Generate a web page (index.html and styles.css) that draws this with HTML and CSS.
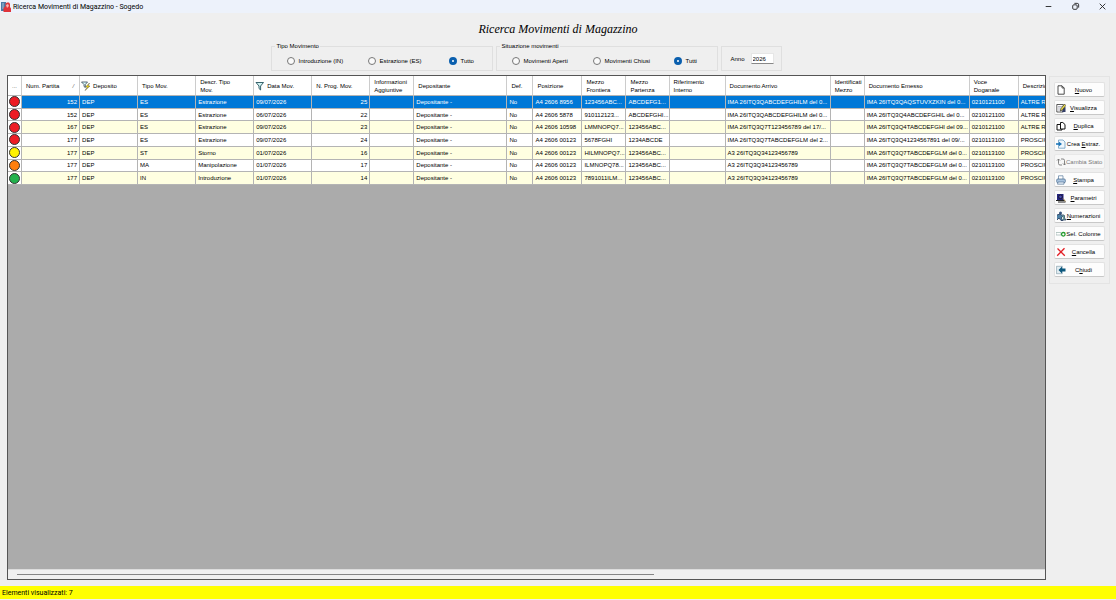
FILE: index.html
```html
<!DOCTYPE html>
<html lang="it">
<head>
  <meta charset="UTF-8" />
  <meta name="viewport" content="width=device-width, initial-scale=1.0" />
  <title>Ricerca Movimenti di Magazzino - Sogedo</title>
  <link rel="stylesheet" href="styles.css">
</head>
<body>
  <header class="titlebar">
    <svg class="app-icon" viewBox="0 0 10 10">
      <rect x="0" y="0" width="5" height="9" fill="#4a7aa5"/>
      <path d="M1 2h2M1 4h2M1 6h2" stroke="#d5e4f0" stroke-width=".7"/>
      <path d="M2.500 10V6l2-2V1.500L6 .5h2l1 1.500v3l1 1.500V10z" fill="#e0343a"/>
      <path d="M5 3l2-1 1 2-2 2z" fill="#f7b5b0"/>
    </svg>
    <span class="caption">Ricerca Movimenti di Magazzino - Sogedo</span>
    <div class="window-controls">
      <button aria-label="Riduci"><svg viewBox="0 0 8 8"><path d="M1.500 4h5"/></svg></button>
      <button aria-label="Ripristina"><svg viewBox="0 0 8 8"><rect x="1.5" y="2.5" width="4" height="4" rx="1"/><path d="M3 1.200h2.500a1.300 1.300 0 0 1 1.300 1.300V5"/></svg></button>
      <button aria-label="Chiudi finestra"><svg viewBox="0 0 8 8"><path d="M1.500 1.500l5 5M6.500 1.500l-5 5"/></svg></button>
    </div>
  </header>

  <h1>Ricerca Movimenti di Magazzino</h1>

  <div class="workspace">
    <main>
      <form class="filters">
        <fieldset>
          <legend>Tipo Movimento</legend>
          <div class="options">
            <label><input type="radio" name="tipo">Introduzione (IN)</label>
            <label><input type="radio" name="tipo">Estrazione (ES)</label>
            <label><input type="radio" name="tipo" checked>Tutto</label>
          </div>
        </fieldset>
        <fieldset>
          <legend>Situazione movimenti</legend>
          <div class="options">
            <label><input type="radio" name="situazione">Movimenti Aperti</label>
            <label><input type="radio" name="situazione">Movimenti Chiusi</label>
            <label><input type="radio" name="situazione" checked>Tutti</label>
          </div>
        </fieldset>
        <div class="year">
          <label for="anno">Anno</label>
          <input id="anno" type="text" value="2026">
        </div>
      </form>

      <div class="grid">
        <div class="grid-view">
          <table>
            <colgroup>
              <col class="w-dot"><col class="w-std"><col class="w-std"><col class="w-std"><col class="w-std"><col class="w-std"><col class="w-std">
              <col class="w-code"><col class="w-name"><col class="w-def"><col class="w-pos"><col class="w-code"><col class="w-part"><col class="w-rif">
              <col class="w-doc"><col class="w-id"><col class="w-doc"><col class="w-pos"><col class="w-last">
            </colgroup>
            <thead>
              <tr>
                <th class="more">...</th>
                <th><div class="sorted">Num. Partita <i>/</i></div></th>
                <th class="filtered"><div><svg viewBox="0 0 10 10"><path d="M.5 1h6L4.300 3.500V6.500L3 5.500V3.500z" fill="#dff" stroke="#345" stroke-width=".8"/><path d="M8.500 2L4.500 6H6.500L4 9.500 9 5H7z" fill="#ffe000" stroke="#554" stroke-width=".5"/></svg>Deposito</div></th>
                <th>Tipo Mov.</th>
                <th>Descr. Tipo<br>Mov.</th>
                <th class="filtered"><div><svg viewBox="0 0 10 10"><path d="M1 1.500h7.500L5.600 5v4L4 7.500V5z" fill="#d4f4f4" stroke="#24525c" stroke-width=".9"/></svg>Data Mov.</div></th>
                <th>N. Prog. Mov.</th>
                <th>Informazioni<br>Aggiuntive</th>
                <th>Depositante</th>
                <th>Def.</th>
                <th>Posizione</th>
                <th>Mezzo<br>Frontiera</th>
                <th>Mezzo<br>Partenza</th>
                <th>Riferimento<br>Interno</th>
                <th>Documento Arrivo</th>
                <th>Identificati<br>Mezzo</th>
                <th>Documento Emesso</th>
                <th>Voce<br>Doganale</th>
                <th>Descrizione</th>
              </tr>
            </thead>
            <tbody>
              <tr class="selected">
                <td><span class="dot red"></span></td><td class="num">152</td><td>DEP</td><td>ES</td><td>Estrazione</td><td>09/07/2026</td><td class="num">25</td><td></td><td>Depositante -</td><td>No</td><td>A4 2606 8956</td><td>123456ABC...</td><td>ABCDEFG1...</td><td></td><td>IMA 26ITQ3QABCDEFGHILM del 0...</td><td></td><td>IMA 26ITQ3QAQSTUVXZKIN del 0...</td><td>0210121100</td><td>ALTRE RIF</td>
              </tr>
              <tr>
                <td><span class="dot red"></span></td><td class="num">152</td><td>DEP</td><td>ES</td><td>Estrazione</td><td>06/07/2026</td><td class="num">22</td><td></td><td>Depositante -</td><td>No</td><td>A4 2606 5878</td><td>910112123...</td><td>ABCDEFGHI...</td><td></td><td>IMA 26ITQ3QABCDEFGHILM del 0...</td><td></td><td>IMA 26ITQ3Q4ABCDEFGHIL del 0...</td><td>0210121100</td><td>ALTRE RIF</td>
              </tr>
              <tr>
                <td><span class="dot red"></span></td><td class="num">167</td><td>DEP</td><td>ES</td><td>Estrazione</td><td>09/07/2026</td><td class="num">23</td><td></td><td>Depositante -</td><td>No</td><td>A4 2606 10598</td><td>LMMNOPQ7...</td><td>123456ABC...</td><td></td><td>IMA 26ITQ3Q7T123456789 del 17/...</td><td></td><td>IMA 26ITQ3Q4TABCDEFGHI del 09...</td><td>0210121100</td><td>ALTRE RIF</td>
              </tr>
              <tr>
                <td><span class="dot red"></span></td><td class="num">177</td><td>DEP</td><td>ES</td><td>Estrazione</td><td>09/07/2026</td><td class="num">24</td><td></td><td>Depositante -</td><td>No</td><td>A4 2606 00123</td><td>5678FGHI</td><td>1234ABCDE</td><td></td><td>IMA 26ITQ3Q7TABCDEFGLM del 2...</td><td></td><td>IMA 26ITQ3Q41234567891 del 09/...</td><td>0210113100</td><td>PROSCIUTTI</td>
              </tr>
              <tr>
                <td><span class="dot yellow"></span></td><td class="num">177</td><td>DEP</td><td>ST</td><td>Storno</td><td>01/07/2026</td><td class="num">16</td><td></td><td>Depositante -</td><td>No</td><td>A4 2606 00123</td><td>HILMNOPQ7...</td><td>123456ABC...</td><td></td><td>A3 26ITQ3Q34123456789</td><td></td><td>IMA 26ITQ3Q7TABCDEFGLM del 0...</td><td>0210113100</td><td>PROSCIUTTI</td>
              </tr>
              <tr>
                <td><span class="dot orange"></span></td><td class="num">177</td><td>DEP</td><td>MA</td><td>Manipolazione</td><td>01/07/2026</td><td class="num">17</td><td></td><td>Depositante -</td><td>No</td><td>A4 2606 00123</td><td>ILMNOPQ78...</td><td>123456ABC...</td><td></td><td>A3 26ITQ3Q34123456789</td><td></td><td>IMA 26ITQ3Q7TABCDEFGLM del 0...</td><td>0210113100</td><td>PROSCIUTTI</td>
              </tr>
              <tr>
                <td><span class="dot green"></span></td><td class="num">177</td><td>DEP</td><td>IN</td><td>Introduzione</td><td>01/07/2026</td><td class="num">14</td><td></td><td>Depositante -</td><td>No</td><td>A4 2606 00123</td><td>7891011ILM...</td><td>123456ABC...</td><td></td><td>A3 26ITQ3Q34123456789</td><td></td><td>IMA 26ITQ3Q7TABCDEFGLM del 0...</td><td>0210113100</td><td>PROSCIUTTI</td>
              </tr>
            </tbody>
          </table>
        </div>
        <div class="scrollbar"><div class="thumb"></div></div>
      </div>
    </main>

    <aside class="actions">
      <button>
        <svg viewBox="0 0 10 10"><path d="M2 .8h4l2.200 2.200v6.200H2z" fill="#fff" stroke="#222" stroke-width=".8"/><path d="M6 .8V3h2.200" fill="none" stroke="#222" stroke-width=".7"/></svg>
        <span><u>N</u>uovo</span>
      </button>
      <button>
        <svg viewBox="0 0 10 10"><path d="M.8 1.500h6.500v7.500H.8z" fill="#fff" stroke="#333" stroke-width=".8"/><path d="M2 3.500h4M2 5h3M2 7h3" stroke="#889" stroke-width=".6"/><path d="M7 5l2.500-1v5H6z" fill="#333d66"/><path d="M8.500 1L5 5.500 4.300 8l2.200-1L9.800 2.500z" fill="#e8d84a" stroke="#222" stroke-width=".6"/></svg>
        <span><u>V</u>isualizza</span>
      </button>
      <button>
        <svg viewBox="0 0 10 10"><path d="M4.500 1.500h2.300l2.200 2v4.500H4.500z" fill="#fff" stroke="#111"/><path d="M4 3.500H1v5.500h5V8" fill="none" stroke="#111"/></svg>
        <span><u>D</u>uplica</span>
      </button>
      <button>
        <svg viewBox="0 0 10 10"><path d="M2.500 1h4.500l2 2v6.200H2.500z" fill="#eef6fc" stroke="#6b9cbf" stroke-width=".8"/><path d="M0 4.200h3V2.700L6 5 3 7.300V5.800H0z" fill="#1673b8"/></svg>
        <span>Crea <u>E</u>straz.</span>
      </button>
      <button disabled>
        <svg viewBox="0 0 10 10"><path d="M2.500 2v4.500a1.500 1.500 0 0 0 1.500 1.500h2M1 3.500L2.500 2 4 3.500M5 2h2a1.500 1.500 0 0 1 1.500 1.500V8M7 6.500L8.500 8 10 6.500" fill="none" stroke="#777" stroke-width=".9"/></svg>
        <span>Cambia Stato</span>
      </button>
      <button>
        <svg viewBox="0 0 10 10"><path d="M2.500 4.500V.8H7v3.700" fill="#fff" stroke="#567a9c" stroke-width=".7"/><rect x=".7" y="4" width="8.600" height="3.700" rx="1" fill="#a9c4df" stroke="#45678a" stroke-width=".7"/><path d="M2 7h6v2.200H1.500z" fill="#e8f1fa" stroke="#45678a" stroke-width=".6"/></svg>
        <span><u>S</u>tampa</span>
      </button>
      <button>
        <svg viewBox="0 0 10 10"><path d="M1 1h6.500v6H1z" fill="#23237d"/><circle cx="4.500" cy="3.800" r="1.800" fill="#4949b5" stroke="#111" stroke-width=".7"/><path d="M0 7.500h8M2 9h7.500" stroke="#222" stroke-width="1.200"/><path d="M7 5.500l2.500 3" stroke="#846a32"/></svg>
        <span><u>P</u>arametri</span>
      </button>
      <button>
        <svg viewBox="0 0 10 10"><circle cx="4.500" cy="2" r="1.500" fill="#39567e"/><path d="M1 4l3-1 3 2-2 2 2 2.500H5L3 7 1 9" fill="#4d81a5" stroke="#203358" stroke-width=".8"/><path d="M6.500 3.500l2 1v2.500l1.500 2H7" fill="#6c9f97" stroke="#293f60" stroke-width=".7"/></svg>
        <span><u>N</u>umerazioni</span>
      </button>
      <button>
        <svg viewBox="0 0 10 10"><path d="M0 3.500h5v2.500H0z" fill="#fff" stroke="#8ba6a1" stroke-width=".6"/><circle cx="7.300" cy="5.300" r="1.800" fill="#fff" stroke="#269c32" stroke-width="1.300"/></svg>
        <span>Sel. Colonne</span>
      </button>
      <button>
        <svg viewBox="0 0 10 10"><path d="M1.500 1.500L8.800 8.800M8.500 1.200L1.200 8.800" stroke="#e21f26" stroke-width="1.300"/></svg>
        <span><u>C</u>ancella</span>
      </button>
      <button>
        <svg viewBox="0 0 10 10"><rect x=".7" y="1.200" width="5.500" height="7.600" fill="#e2edf2" stroke="#8aa2af" stroke-width=".7"/><path d="M2.500 5L6 1.500v2h3.500v3H6v2z" fill="#0c587e"/></svg>
        <span>C<u>h</u>iudi</span>
      </button>
    </aside>
  </div>

  <footer>Elementi visualizzati: 7</footer>
</body>
</html>
```

FILE: styles.css
```css
* {
  box-sizing: border-box;
}
body {
  margin: 0;
  height: 100vh;
  display: flex;
  flex-direction: column;
  background: #efefef;
  color: #000;
  font-family: "Liberation Sans", Arial, sans-serif;
  font-size: 6px;
  line-height: 8px;
}
button, input {
  font: inherit;
  color: inherit;
}

/* title bar */
.titlebar {
  display: flex;
  align-items: center;
  height: 13px;
  padding: 0 9px 0 1px;
  gap: 2px;
  background: #edf2fb;
}
.app-icon {
  width: 10px;
  height: 10px;
}
.caption, footer {
  font-family: Roboto, "Segoe UI", sans-serif;
  font-size: 7px;
}
.window-controls {
  display: flex;
  gap: 18px;
  margin-left: auto;
}
.window-controls button {
  display: flex;
  padding: 0;
  border: none;
  background: none;
}
.window-controls svg {
  width: 9px;
  height: 9px;
  fill: none;
  stroke: #222;
  stroke-width: .8;
}
h1 {
  margin: 8px 0 5px;
  font: italic 12px/16px "Liberation Serif", "Times New Roman", serif;
  text-align: center;
}

/* filters */
.workspace {
  flex: 1;
  display: flex;
  align-items: flex-start;
  gap: 3px;
  min-height: 0;
  padding: 0 6px 6px 7px;
}
main {
  flex: 1;
  display: flex;
  flex-direction: column;
  align-self: stretch;
  min-width: 0;
}
.filters {
  display: flex;
  justify-content: center;
  align-items: flex-end;
  gap: 3px;
  height: 29px;
  margin-bottom: 4px;
}
fieldset {
  width: 222px;
  height: 29px;
  margin: 0;
  padding: 0 0 0 15px;
  border: 1px solid #dfdfdf;
}
legend {
  margin-left: -12px;
  padding: 0 1px;
}
.options {
  display: grid;
  grid-template-columns: 81px 81px auto;
  padding-top: 7px;
}
.options label {
  display: flex;
  align-items: center;
  gap: 3px;
  white-space: nowrap;
}
.options input {
  appearance: none;
  width: 8px;
  height: 8px;
  margin: 0;
  border: 1px solid #777;
  border-radius: 50%;
  background: #fafafa;
}
.options input:checked {
  border: 3px solid #0a5fae;
  background: #fff;
}
.year {
  display: flex;
  align-items: center;
  gap: 6px;
  height: 25px;
  padding: 0 7px 0 8px;
  border: 1px solid #dfdfdf;
}
.year input {
  width: 23px;
  height: 11px;
  padding: 0 1px;
  border: 1px solid #e6e6e6;
  border-bottom-color: #888;
  background: #fff;
}

/* data grid */
.grid {
  flex: 1;
  display: flex;
  flex-direction: column;
  min-height: 0;
  border: 1px solid #555;
  background: #ababab;
}
.grid-view {
  flex: 1;
  overflow: hidden;
}
table {
  table-layout: fixed;
  width: 1091px;
  height: 109px;
  border-collapse: separate;
  border-spacing: 0;
  background: #fff;
}
.w-dot { width: 14px; }
.w-std { width: 58px; }
.w-code { width: 44px; }
.w-name { width: 93px; }
.w-def { width: 26px; }
.w-pos { width: 49px; }
.w-part { width: 43px; }
.w-rif { width: 56px; }
.w-doc { width: 105px; }
.w-id { width: 34px; }
.w-last { width: 80px; }
th, td {
  overflow: hidden;
  white-space: nowrap;
  text-align: left;
  vertical-align: middle;
  border-right: 1px solid #b4b4b4;
  border-bottom: 1px solid #b4b4b4;
}
th {
  height: 20px;
  padding: 0 0 0 4px;
  border-right-color: #ccc;
  font-weight: normal;
}
td {
  padding: 0 0 0 2px;
}
th.more {
  color: #555;
}
.num {
  padding-right: 2px;
  text-align: right;
}
.sorted {
  display: flex;
  justify-content: space-between;
  padding-right: 5px;
}
.sorted i {
  color: #666;
}
.filtered {
  padding-left: 1px;
}
.filtered div {
  display: flex;
  align-items: center;
  gap: 2px;
}
.filtered svg {
  width: 10px;
  height: 10px;
}
tbody tr:nth-child(odd) {
  background: #ffffe1;
}
tbody tr.selected {
  background: #0078d7;
  color: #fff;
}
td:first-child {
  padding: 0 0 0 1px;
  background: #fff;
}
.dot {
  display: block;
  width: 11px;
  height: 11px;
  border: 1px solid #333;
  border-radius: 50%;
}
.red { background: #ed1c24; }
.yellow { background: #fff200; }
.orange { background: #ff7f0e; }
.green { background: #22b14c; }
.scrollbar {
  height: 10px;
  padding: 4px 0 0 9px;
  border-top: 1px solid #dcdcdc;
  background: #f0f0f0;
}
.thumb {
  width: 62%;
  height: 1px;
  background: #858585;
}

/* action buttons */
.actions {
  display: flex;
  flex-direction: column;
  gap: 3px;
  width: 61px;
  margin-top: 34px;
  padding: 5px 4px 6px;
  border: 1px solid #e4e4e4;
}
.actions button {
  display: flex;
  align-items: center;
  height: 15px;
  padding: 0 3px 0 1px;
  border: 1px solid #e2e2e2;
  border-bottom-color: #c8c8c8;
  border-radius: 2px;
  background: #fdfdfd;
}
.actions button:disabled {
  border-color: #e8e8e8;
  background: #f7f7f7;
  color: #777;
}
.actions svg {
  flex: none;
  width: 10px;
  height: 10px;
}
.actions span {
  flex: 1;
  white-space: nowrap;
  text-align: center;
}

footer {
  height: 13px;
  margin-bottom: 1px;
  padding: 3px 2px;
  background: #ff0;
}
```
